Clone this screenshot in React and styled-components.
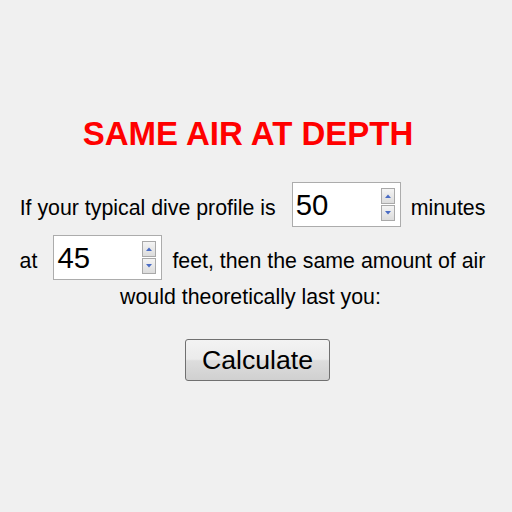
import React from "react";
import styled, { createGlobalStyle } from "styled-components";

const Global = createGlobalStyle`
  html, body { margin: 0; padding: 0; background: #f0f0f0; }
  body { font-family: "Liberation Sans", Arial, sans-serif; color: #000; }
`;

const Page = styled.div`
  width: 512px;
  height: 512px;
  box-sizing: border-box;
  padding-top: 116px;
  display: flex;
  flex-direction: column;
  align-items: stretch;
`;

const Title = styled.h1`
  margin: 0;
  padding-right: 16px;
  font-size: 33px;
  line-height: 36px;
  font-weight: bold;
  color: #ff0000;
  text-align: center;
`;

const Row = styled.div`
  display: flex;
  justify-content: center;
  align-items: baseline;
  padding-right: ${(p) => p.$pr || 0}px;
  margin-top: ${(p) => p.$mt || 0}px;
  font-size: 21.33px;
  line-height: 24px;
  white-space: nowrap;
`;

const Label = styled.span`
  margin-left: ${(p) => p.$ml || 0}px;
  margin-right: ${(p) => p.$mr || 0}px;
`;

const SpinBox = styled.div`
  box-sizing: border-box;
  width: 109px;
  height: 45px;
  border: 1px solid #acacac;
  background: #fff;
  display: flex;
  justify-content: space-between;
  align-items: flex-start;
  padding: 4px 5px 0 3px;
  font-size: 29.33px;
  line-height: 35px;
`;

const Value = styled.span``;

const Spinner = styled.div`
  display: flex;
  flex-direction: column;
  gap: 1px;
  margin-top: 1px;
`;

const SpinButton = styled.div`
  box-sizing: border-box;
  width: 14px;
  height: 16px;
  border: 1px solid #a9a9a9;
  background: linear-gradient(#f4f4f4, #dcdcdc);
  display: flex;
  align-items: center;
  justify-content: center;
`;

const Arrow = ({ up }) => (
  <svg width="6" height="4" viewBox="0 0 6 4">
    <polygon points={up ? "0,4 6,4 3,0.5" : "0,0 6,0 3,3.5"} fill="#4a6cc4" />
  </svg>
);

const Spin = ({ value }) => (
  <SpinBox>
    <Value>{value}</Value>
    <Spinner>
      <SpinButton><Arrow up /></SpinButton>
      <SpinButton><Arrow /></SpinButton>
    </Spinner>
  </SpinBox>
);

const ButtonRow = styled.div`
  display: flex;
  justify-content: center;
  margin-top: 30px;
  padding-left: 3px;
`;

const Button = styled.button`
  box-sizing: border-box;
  width: 145px;
  height: 42px;
  border: 1px solid #707070;
  border-radius: 3px;
  background: linear-gradient(#f3f3f3 0%, #ebebeb 48%, #dddddd 52%, #d0d0d0 100%);
  font-family: "Liberation Sans", Arial, sans-serif;
  font-size: 26.67px;
  color: #000;
  padding: 0;
  line-height: 30px;
`;

export default function App() {
  return (
    <>
      <Global />
      <Page>
        <Title>SAME AIR AT DEPTH</Title>
        <Row $mt={30} $pr={7}>
          <Label $mr={16}>If your typical dive profile is</Label>
          <Spin value="50" />
          <Label $ml={10}>minutes</Label>
        </Row>
        <Row $mt={8} $pr={7}>
          <Label $mr={16}>at</Label>
          <Spin value="45" />
          <Label $ml={10}>feet, then the same amount of air</Label>
        </Row>
        <Row $mt={5} $pr={11}>
          <Label>would theoretically last you:</Label>
        </Row>
        <ButtonRow>
          <Button>Calculate</Button>
        </ButtonRow>
      </Page>
    </>
  );
}
